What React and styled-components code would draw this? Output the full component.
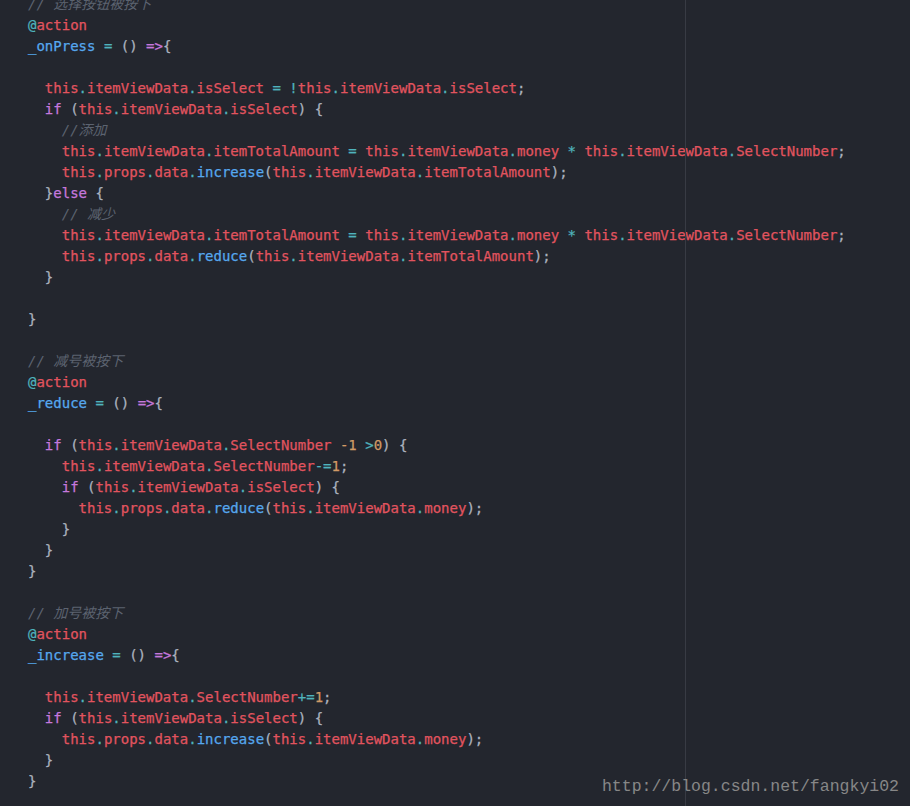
import React from "react";
import styled, { createGlobalStyle } from "styled-components";

const source = `// 选择按钮被按下
@action
_onPress = () =>{

  this.itemViewData.isSelect = !this.itemViewData.isSelect;
  if (this.itemViewData.isSelect) {
    //添加
    this.itemViewData.itemTotalAmount = this.itemViewData.money * this.itemViewData.SelectNumber;
    this.props.data.increase(this.itemViewData.itemTotalAmount);
  }else {
    // 减少
    this.itemViewData.itemTotalAmount = this.itemViewData.money * this.itemViewData.SelectNumber;
    this.props.data.reduce(this.itemViewData.itemTotalAmount);
  }

}

// 减号被按下
@action
_reduce = () =>{

  if (this.itemViewData.SelectNumber -1 >0) {
    this.itemViewData.SelectNumber-=1;
    if (this.itemViewData.isSelect) {
      this.props.data.reduce(this.itemViewData.money);
    }
  }
}

// 加号被按下
@action
_increase = () =>{

  this.itemViewData.SelectNumber+=1;
  if (this.itemViewData.isSelect) {
    this.props.data.increase(this.itemViewData.money);
  }
}`;

const KEYWORDS = ["if", "else"];

// tiny tokenizer, just enough for this snippet
function tokenize(line) {
  const out = [];
  const re = /(\/\/.*$)|(=>)|(-=|\+=)|(-\d+|\d+)|([A-Za-z_][A-Za-z0-9_]*)|(@)|(\.)|([=!*>])|(\s+)|([(){};])/g;
  let m;
  while ((m = re.exec(line))) {
    const [text] = m;
    let kind = "punct";
    if (m[1]) kind = "comment";
    else if (m[2]) kind = "keyword";
    else if (m[3]) kind = "operator";
    else if (m[4]) kind = "number";
    else if (m[5]) {
      const rest = line.slice(re.lastIndex);
      if (KEYWORDS.includes(text)) kind = "keyword";
      else if (/^\(/.test(rest) || /^ = \(\)/.test(rest)) kind = "func";
      else kind = "variable";
    } else if (m[6] || m[7] || m[8]) kind = "operator";
    else if (m[9]) kind = "space";
    out.push({ kind, text });
  }
  return out;
}

const palette = {
  comment: "#5c6370",
  keyword: "#c678dd",
  operator: "#4fb3bd",
  number: "#d19a66",
  func: "#56a8ef",
  variable: "#e2545f",
  punct: "#abb2bf",
  space: "inherit",
};

const GlobalStyle = createGlobalStyle`
  html, body {
    margin: 0;
    padding: 0;
    background: #23262e;
  }
`;

const Editor = styled.div`
  position: relative;
  width: 910px;
  height: 806px;
  overflow: hidden;
  background: #23262e;
`;

const WrapGuide = styled.div`
  position: absolute;
  top: 0;
  bottom: 0;
  left: 685px;
  width: 1px;
  background: #383b44;
`;

const Code = styled.div`
  margin-top: -6px;
  padding-left: 28px;
  font-family: "DejaVu Sans Mono", "Noto Sans CJK SC", monospace;
  font-size: 14px;
  line-height: 21px;
  color: #abb2bf;
`;

const Line = styled.div`
  height: 21px;
  white-space: pre;
`;

const Token = styled.span`
  color: ${({ $kind }) => palette[$kind]};
  font-style: ${({ $kind }) => ($kind === "comment" ? "italic" : "normal")};
  -webkit-text-stroke: ${({ $kind }) => ($kind === "comment" ? "0" : "0.25px")};
`;

const Watermark = styled.div`
  position: absolute;
  right: 11px;
  bottom: 10px;
  font-family: "Liberation Mono", "DejaVu Sans Mono", monospace;
  font-size: 16.5px;
  color: #878787;
`;

export default function App() {
  const lines = source.split("\n");
  return (
    <>
      <GlobalStyle />
      <Editor>
        <WrapGuide />
        <Code>
          {lines.map((line, i) => (
            <Line key={i}>
              {tokenize(line).map((t, j) => (
                <Token key={j} $kind={t.kind}>
                  {t.text}
                </Token>
              ))}
            </Line>
          ))}
        </Code>
        <Watermark>http://blog.csdn.net/fangkyi02</Watermark>
      </Editor>
    </>
  );
}
